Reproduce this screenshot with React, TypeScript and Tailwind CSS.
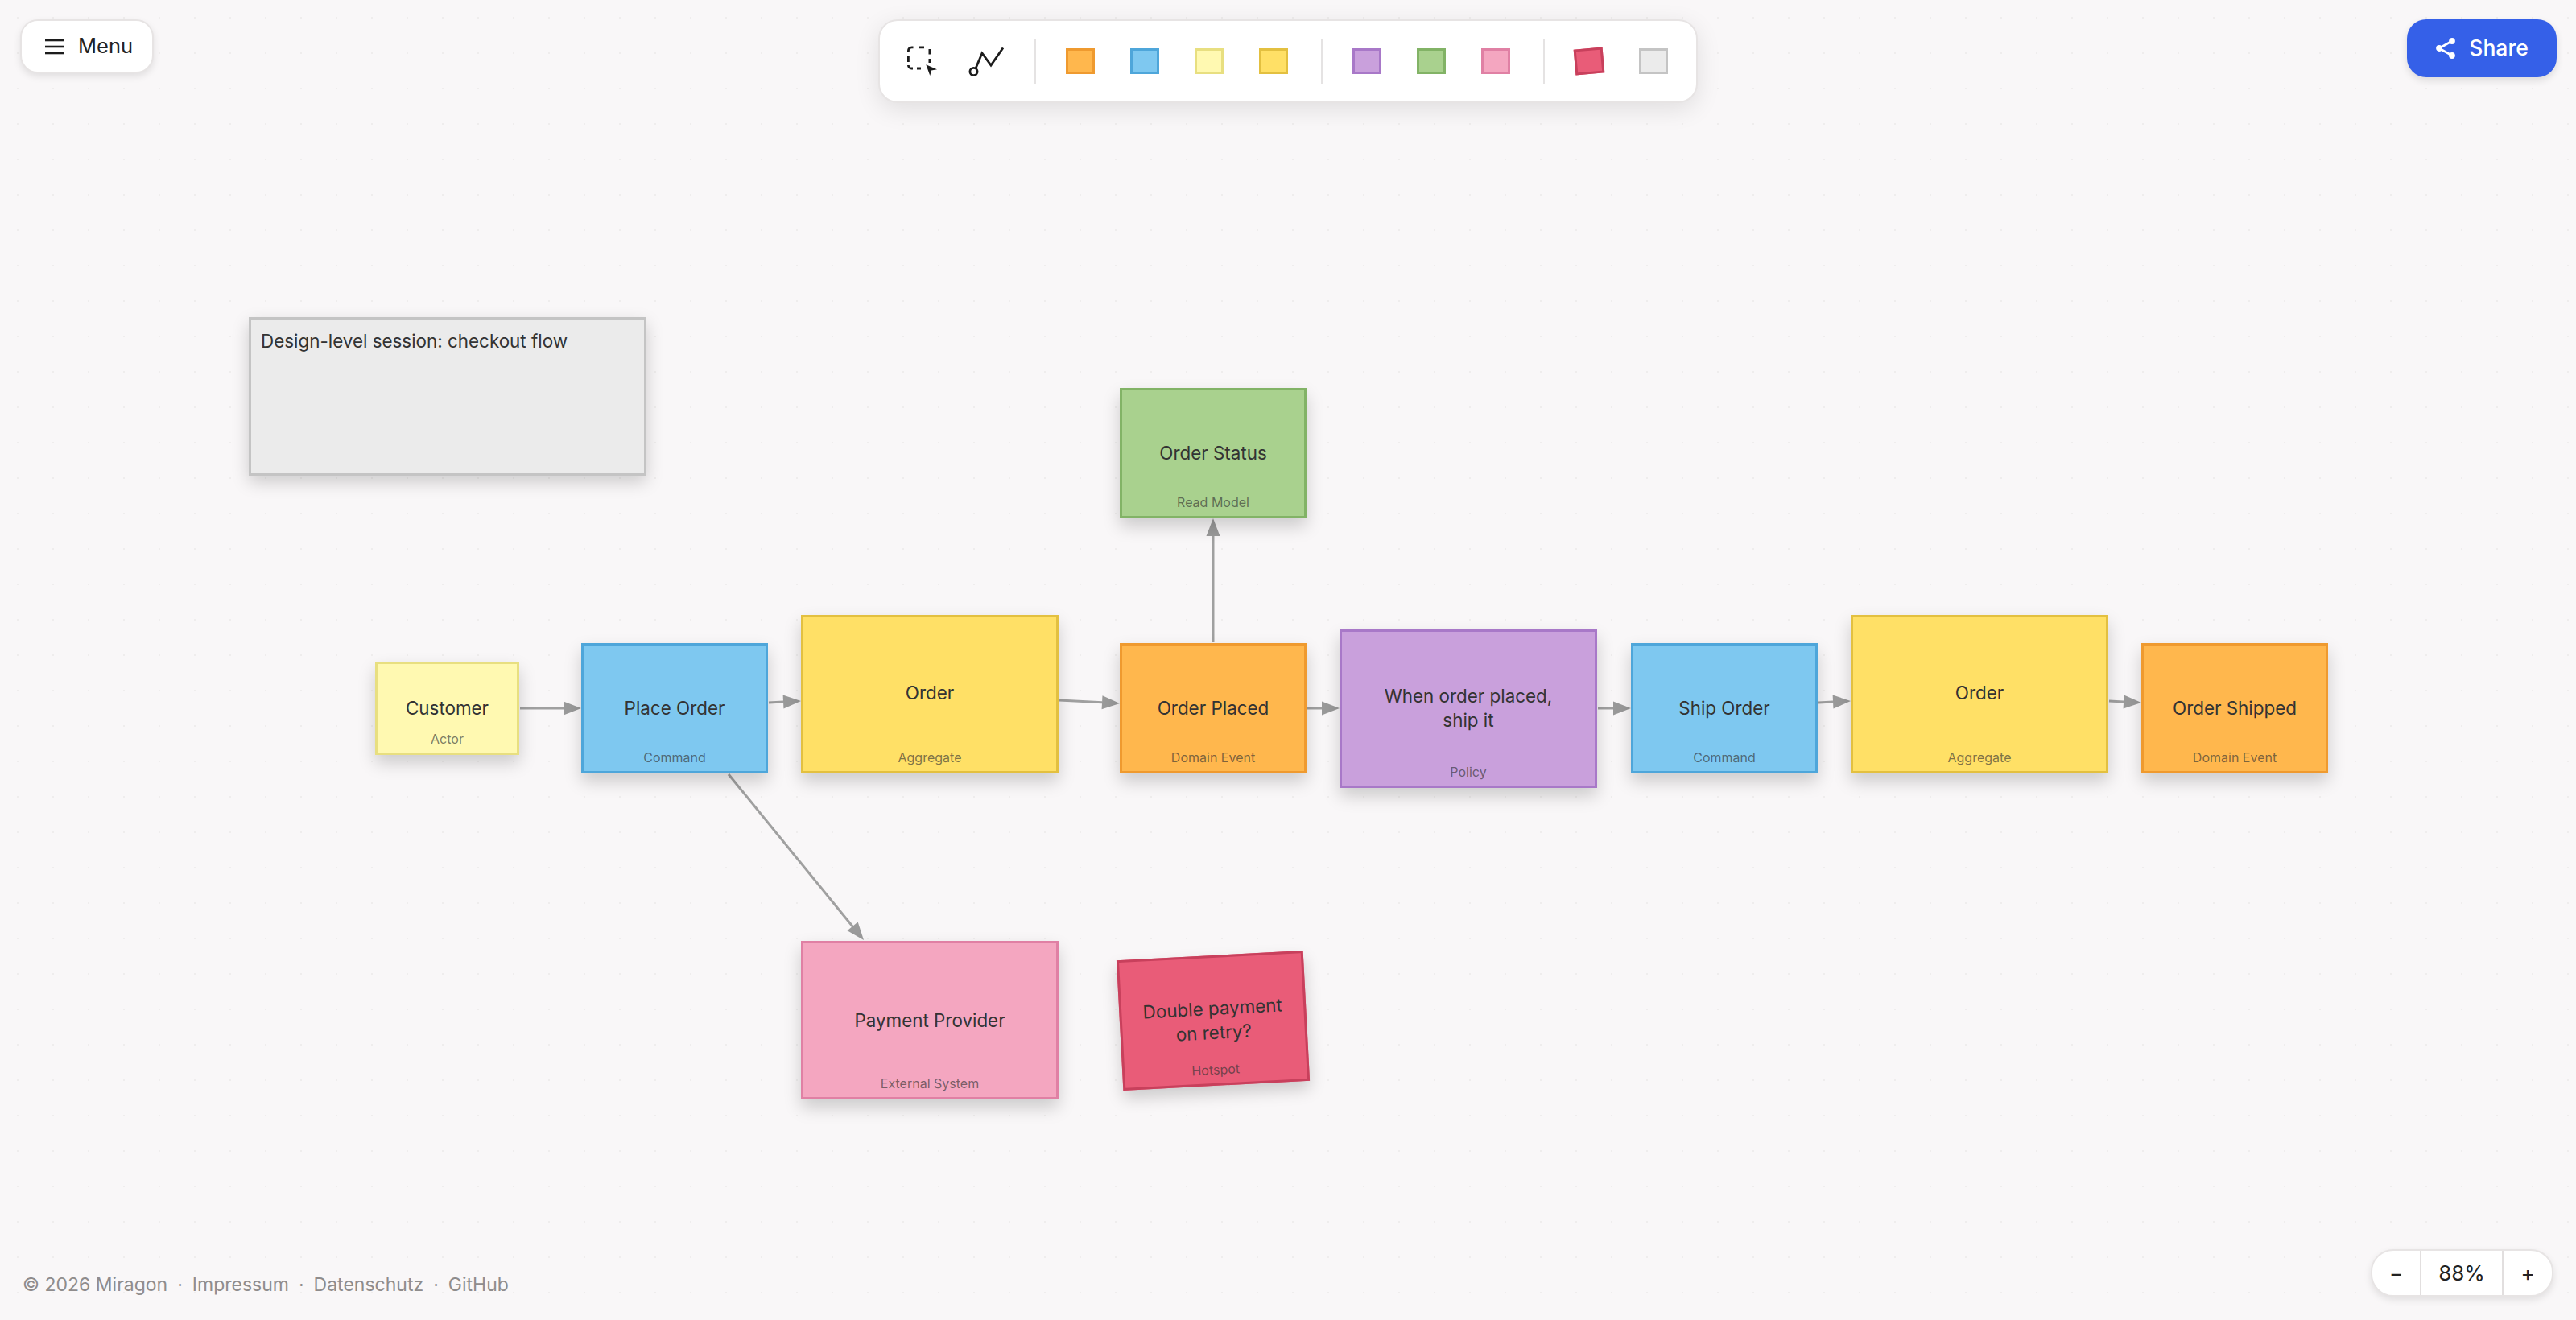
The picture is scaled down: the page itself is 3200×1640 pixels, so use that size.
const nodes = [
  { label: "Customer", sub: "Actor", box: "left-[466px] top-[822px] w-[179px] h-[116px] bg-[#fff9b1] border-[#e8df80]" },
  { label: "Place Order", sub: "Command", box: "left-[722px] top-[799px] w-[232px] h-[162px] bg-[#7ec8f0] border-[#4ea6da]" },
  { label: "Order", sub: "Aggregate", box: "left-[995px] top-[764px] w-[320px] h-[197px] pb-[3px] bg-[#ffe066] border-[#e3c040]" },
  { label: "Order Status", sub: "Read Model", box: "left-[1391px] top-[482px] w-[232px] h-[162px] bg-[#a9d18e] border-[#82b366]" },
  { label: "Order Placed", sub: "Domain Event", box: "left-[1391px] top-[799px] w-[232px] h-[162px] bg-[#ffb74d] border-[#ef9a2f]" },
  { label: "When order placed,\nship it", sub: "Policy", box: "left-[1664px] top-[782px] w-[320px] h-[197px] pb-[1px] bg-[#c9a0dc] border-[#a878c8]" },
  { label: "Ship Order", sub: "Command", box: "left-[2026px] top-[799px] w-[232px] h-[162px] bg-[#7ec8f0] border-[#4ea6da]" },
  { label: "Order", sub: "Aggregate", box: "left-[2299px] top-[764px] w-[320px] h-[197px] pb-[3px] bg-[#ffe066] border-[#e3c040]" },
  { label: "Order Shipped", sub: "Domain Event", box: "left-[2660px] top-[799px] w-[232px] h-[162px] bg-[#ffb74d] border-[#ef9a2f]" },
  { label: "Payment Provider", sub: "External System", box: "left-[995px] top-[1169px] w-[320px] h-[197px] bg-[#f4a6c0] border-[#e080a4]" },
  { label: "Double payment\non retry?", sub: "Hotspot", box: "left-[1391px] top-[1187px] w-[232px] h-[162px] bg-[#e95c78] border-[#c8405c] -rotate-3" },
];

// x1, y1, x2 (tip), y2
const arrows = [
  [646, 880, 722, 880],
  [955, 873, 995, 871],
  [1316, 870, 1391, 874],
  [1507, 798, 1507, 644],
  [905, 962, 1073, 1168],
  [1624, 880, 1664, 880],
  [1985, 880, 2026, 880],
  [2259, 873, 2299, 871],
  [2620, 871, 2660, 873],
];

function Arrow({ a }: { a: number[] }) {
  const [x1, y1, x2, y2] = a;
  const len = Math.hypot(x2 - x1, y2 - y1);
  const ux = (x2 - x1) / len;
  const uy = (y2 - y1) / len;
  const bx = x2 - ux * 22;
  const by = y2 - uy * 22;
  const head = `${x2},${y2} ${bx - uy * 8.5},${by + ux * 8.5} ${bx + uy * 8.5},${by - ux * 8.5}`;
  return (
    <g>
      <line x1={x1} y1={y1} x2={bx} y2={by} stroke="#a0a0a0" strokeWidth="3" />
      <polygon points={head} fill="#9a9a9a" />
    </g>
  );
}

function Swatch({ className }: { className: string }) {
  return (
    <button className="w-[80px] h-[56px] flex items-center justify-center">
      <span className={"block w-[36px] h-[32px] border-[3px] " + className}></span>
    </button>
  );
}

function Divider() {
  return <div className="w-[2px] h-[56px] ml-[19px] mr-[15px] bg-[#e5e3e3]"></div>;
}

export default function App() {
  return (
    <div className="relative w-[3200px] h-[1640px] overflow-hidden bg-[#f9f7f8] font-['Inter',sans-serif] text-[#222] bg-[radial-gradient(circle,#efeded_1.5px,transparent_1.5px)] bg-[length:44px_44px]">
      {/* edges */}
      <svg className="absolute inset-0" width="3200" height="1640">
        {arrows.map((a, i) => (
          <Arrow key={i} a={a} />
        ))}
      </svg>

      {/* text note */}
      <div className="absolute left-[309px] top-[394px] w-[494px] h-[197px] p-[12px] border-[3px] border-[#c4c4c4] bg-[#ebebeb] text-[22.4px] leading-[30px] text-[#333] shadow-[0_8px_20px_rgba(0,0,0,0.18)]">
        Design-level session: checkout flow
      </div>

      {/* nodes */}
      {nodes.map((n, i) => (
        <div
          key={i}
          className={"absolute flex items-center justify-center border-[3px] text-center text-[22.4px] leading-[30px] text-[#333] shadow-[0_10px_20px_rgba(0,0,0,0.18)] " + n.box}
        >
          <span className="whitespace-pre-line">{n.label}</span>
          <span className="absolute left-0 right-0 bottom-[7px] text-[16px] leading-[20px] text-[#333]/65">{n.sub}</span>
        </div>
      ))}

      {/* menu */}
      <button className="absolute left-[25px] top-[24px] w-[166px] h-[67px] flex items-center pl-[29px] gap-[17px] rounded-[22px] bg-white border-2 border-[#e7e4e4] shadow-[0_4px_10px_rgba(0,0,0,0.1)] text-[25.5px] font-normal text-[#222]">
        <svg width="24" height="20" viewBox="0 0 24 20" fill="none" stroke="#1c1c1c" strokeWidth="2.6">
          <line x1="0" y1="2" x2="24" y2="2" />
          <line x1="0" y1="10" x2="24" y2="10" />
          <line x1="0" y1="18" x2="24" y2="18" />
        </svg>
        <span>Menu</span>
      </button>

      {/* toolbar */}
      <div className="absolute left-[1091px] top-[24px] w-[1018px] h-[104px] flex items-center pl-[13px] pr-[11px] rounded-[24px] bg-white border-2 border-[#e7e4e4] shadow-[0_8px_30px_rgba(0,0,0,0.1)]">
        <button className="w-[80px] h-[56px] flex items-center justify-center">
          <svg width="40" height="40" viewBox="0 0 40 40" fill="none">
            <path
              d="M2.4 9V7a4.2 4.2 0 0 1 4.2-4.2H8.5M15 2.8H22M28.9 5V11.5M28.9 17V22M2.4 14V21M2.4 25a4 4 0 0 0 4 4H8M13 29H18"
              stroke="#1c1c1c"
              strokeWidth="2.8"
            />
            <polygon points="24.3,24.3 38,30.3 31,31.5 29.3,38" fill="#1c1c1c" />
          </svg>
        </button>
        <button className="w-[80px] h-[56px] flex items-center justify-center">
          <svg width="48" height="40" viewBox="0 0 48 40" fill="none" stroke="#1c1c1c" strokeWidth="2.8">
            <circle cx="7.5" cy="33" r="4.6" />
            <polyline points="10,29 18,10 29,25 44,3.5" />
          </svg>
        </button>
        <Divider />
        <Swatch className="bg-[#ffb74d] border-[#ef9a2f]" />
        <Swatch className="bg-[#7ec8f0] border-[#4ea6da]" />
        <Swatch className="bg-[#fff9b1] border-[#e8df80]" />
        <Swatch className="bg-[#ffe066] border-[#e3c040]" />
        <Divider />
        <Swatch className="bg-[#c9a0dc] border-[#a878c8]" />
        <Swatch className="bg-[#a9d18e] border-[#82b366]" />
        <Swatch className="bg-[#f4a6c0] border-[#e080a4]" />
        <Divider />
        <Swatch className="bg-[#e95c78] border-[#c8405c] -rotate-[5deg]" />
        <Swatch className="bg-[#ebebeb] border-[#c4c4c4]" />
      </div>

      {/* share */}
      <button className="absolute left-[2990px] top-[24px] w-[186px] h-[72px] flex items-center justify-center gap-[16px] rounded-[24px] bg-[#3560e8] shadow-[0_4px_10px_rgba(0,0,0,0.12)] text-[26.5px] font-medium text-white">
        <svg width="26" height="28" viewBox="0 0 26 28" fill="white" stroke="white" strokeWidth="2.6">
          <line x1="21" y1="5" x2="5" y2="14" />
          <line x1="5" y1="14" x2="21" y2="23" />
          <circle cx="21" cy="5" r="2.6" />
          <circle cx="5" cy="14" r="2.6" />
          <circle cx="21" cy="23" r="2.6" />
        </svg>
        <span>Share</span>
      </button>

      {/* footer */}
      <div className="absolute left-[28px] top-[1581px] flex items-center gap-[12px] text-[23px] leading-[30px] text-[#8f8c8c]">
        <span>© 2026 Miragon</span>
        <span>·</span>
        <span>Impressum</span>
        <span>·</span>
        <span>Datenschutz</span>
        <span>·</span>
        <span>GitHub</span>
      </div>

      {/* zoom */}
      <div className="absolute left-[2945px] top-[1552px] w-[227px] h-[59px] flex items-center rounded-[28px] bg-white border-2 border-[#e7e4e4] shadow-[0_4px_10px_rgba(0,0,0,0.1)] text-[#222]">
        <button className="w-[61px] h-full flex items-center justify-center border-r-2 border-[#e2dfdf] text-[26px]">−</button>
        <span className="w-[102px] h-full flex items-center justify-center border-r-2 border-[#e2dfdf] text-[26px]">88%</span>
        <button className="flex-1 h-full flex items-center justify-center text-[26px]">+</button>
      </div>
    </div>
  );
}
